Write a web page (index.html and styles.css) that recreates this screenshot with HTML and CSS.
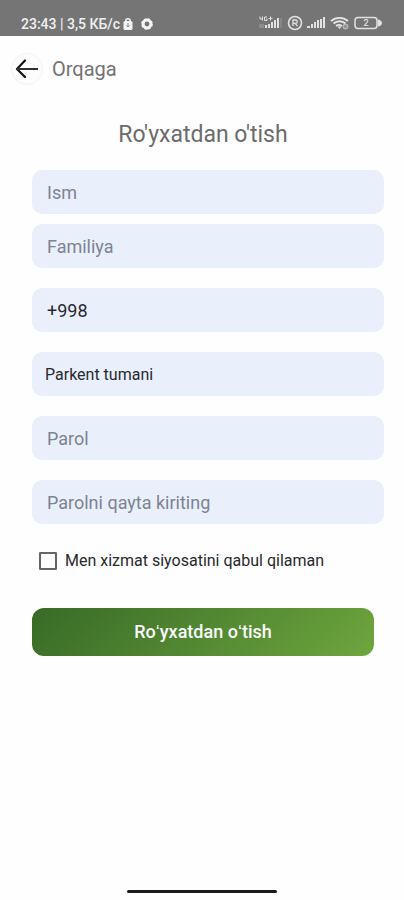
FILE: index.html
```html
<!DOCTYPE html>
<html lang="uz">
<head>
<meta charset="utf-8">
<meta name="viewport" content="width=device-width, initial-scale=1">
<title>Ro'yxatdan o'tish</title>
<link rel="stylesheet" href="styles.css">
</head>
<body>
<div class="status">
  <div class="status-group">
    <span>23:43 | 3,5 КБ/с</span>
    <svg width="10" height="12" viewBox="0 0 10 12"><path d="M2.800 4V2.800a2.200 2 0 0 1 4.400 0V4" fill="none" stroke="#f2f2f2" stroke-width="1.500"/><rect x="0.500" y="3" width="9" height="9" rx="1.500" fill="#f2f2f2"/><path d="M5 5v4M3.500 7.500 5 9l1.500-1.500" fill="none" stroke="#858585"/></svg>
    <svg class="gear" width="12" height="12" viewBox="0 0 12 12"><circle cx="6" cy="6" r="3.900" fill="none" stroke="#f4f4f4" stroke-width="3"/><circle cx="6" cy="6" r="5.200" fill="none" stroke="#f4f4f4" stroke-width="1.200" stroke-dasharray="2.500 1.600"/></svg>
  </div>
  <svg class="status-icons" width="126" height="16" viewBox="0 0 126 16">
    <g fill="none" stroke="#dedede" stroke-width="1">
      <path d="M2 1.500v2.500h3M4.500 1.500v4M9 2H6.500v3.500H9V4H8M10.500 3.500h4M12.500 1.500v4"/>
      <path d="M1 10h5M1 12h5" stroke="#a8a8a8"/>
    </g>
    <path d="M7 10h2v3H7zM10 9h2v4h-2zM13 7h2v6h-2zM16 5h2v8h-2zM19 3h2v10h-2z" fill="#e2e2e2"/>
    <path d="M23 3v10" stroke="#999" fill="none"/>
    <circle cx="37" cy="8" r="6.500" fill="none" stroke="#e2e2e2" stroke-width="1.600"/>
    <path d="M35 11V5h2.500a1.700 1.700 0 0 1 0 3.400H35M37 8.400 39.500 11" fill="none" stroke="#e2e2e2" stroke-width="1.300"/>
    <path d="M49 11h3v2h-3zM53 9h2v4h-2zM56 7h2v6h-2zM59 5h2v8h-2zM62 4h2v9h-2zM65 2h2v11h-2z" fill="#e2e2e2"/>
    <path d="M73 6a13 13 0 0 1 17 0M75.500 8.500a9 9 0 0 1 12 0M78 11a5 5 0 0 1 6 0" fill="none" stroke="#e6e6e6" stroke-width="1.900"/>
    <path d="m79.500 11.500 2 2.500 2-2.500z" fill="#e6e6e6"/>
    <circle cx="87.500" cy="11.500" r="2.500" fill="#999" stroke="#c5c5c5"/>
    <rect x="97" y="2.500" width="22" height="11" rx="3" fill="none" stroke="#e2e2e2" stroke-width="1.500"/>
    <path d="M120 4.500q4 1 4 3.500t-4 3.500z" fill="#e2e2e2"/>
    <text class="battery-level" x="108" y="11" text-anchor="middle">2</text>
  </svg>
</div>
<header class="topbar">
  <button class="back" type="button" aria-label="Orqaga">
    <svg width="24" height="20" viewBox="0 0 24 20"><path d="M10 1.500 2 10l8 8" fill="none" stroke="#111" stroke-width="2.200" stroke-linecap="round" stroke-linejoin="round"/><path d="M2 10h21" stroke="#333" stroke-width="2"/></svg>
  </button>
  <span class="topbar-title">Orqaga</span>
</header>
<main>
  <form class="form">
    <h1 class="title">Ro'yxatdan o'tish</h1>
    <div class="names">
      <input class="field" type="text" placeholder="Ism" aria-label="Ism">
      <input class="field" type="text" placeholder="Familiya" aria-label="Familiya">
    </div>
    <input class="field" type="tel" value="+998" aria-label="Telefon">
    <select class="field field-select" aria-label="Tuman"><option>Parkent tumani</option></select>
    <input class="field" type="password" placeholder="Parol" aria-label="Parol">
    <input class="field" type="password" placeholder="Parolni qayta kiriting" aria-label="Parolni qayta kiriting">
    <label class="agree"><input class="checkbox" type="checkbox">Men xizmat siyosatini qabul qilaman</label>
    <button class="submit" type="submit">Roʻyxatdan oʻtish</button>
  </form>
</main>
<div class="home-indicator"></div>
</body>
</html>
```
FILE: styles.css
```css
* { box-sizing: border-box; }

body {
  margin: 0;
  min-height: 100vh;
  display: flex;
  flex-direction: column;
  background: #fefefe;
  color: #29292d;
  font-family: Roboto, "Liberation Sans", sans-serif;
  font-size: 16px;
}

.status {
  height: 36px;
  padding: 12px 20px 0 21px;
  display: flex;
  justify-content: space-between;
  background: #757575;
  color: #f0f0f0;
  font-size: 14px;
  font-weight: 500;
  line-height: 24px;
}

.status-group {
  display: flex;
  align-items: center;
  height: 24px;
  gap: 3px;
}

.gear { margin-left: 5px; }
.status-icons { margin-top: 3px; }
.battery-level { fill: #e2e2e2; font-size: 9px; }

.topbar {
  display: flex;
  align-items: center;
  gap: 9px;
  padding: 15px 11px 0;
}

.back {
  width: 32px;
  height: 32px;
  padding: 0;
  display: flex;
  align-items: center;
  justify-content: center;
  border: 1px solid #f3f3f3;
  border-radius: 50%;
  background: #fdfdfd;
}

.topbar-title {
  color: #747474;
  font-size: 20px;
  line-height: 36px;
}

.form {
  display: flex;
  flex-direction: column;
  gap: 20px;
  padding: 33px 20px 0 32px;
}

.title {
  margin: 0 10px 0 0;
  color: #6c6c6c;
  font-size: 23px;
  font-weight: 400;
  line-height: 30px;
  text-align: center;
}

.names {
  display: flex;
  flex-direction: column;
  gap: 10px;
}

.field {
  width: 100%;
  height: 44px;
  padding: 0 15px;
  border: 0;
  border-radius: 10px;
  background: #e9f0fc;
  color: #29292d;
  font: inherit;
  font-size: 18px;
  appearance: none;
}

.field::placeholder {
  color: #7d8391;
  opacity: 1;
}

.field-select {
  padding-left: 13px;
  font-size: 16px;
}

.agree {
  display: flex;
  align-items: center;
  gap: 8px;
  padding-left: 7px;
  line-height: 34px;
}

.checkbox {
  width: 18px;
  height: 18px;
  margin: 0;
  border: 2px solid #666;
  border-radius: 1px;
  background: #fefefe;
  appearance: none;
}

.submit {
  height: 48px;
  margin: 10px 10px 0 0;
  border: 0;
  border-radius: 12px;
  background: linear-gradient(135deg, #386a27, #6ea63e);
  color: #fafafa;
  font: inherit;
  font-size: 18px;
  font-weight: 500;
}

.home-indicator {
  width: 150px;
  height: 3px;
  margin: auto auto 7px;
  border-radius: 2px;
  background: #1c1c1c;
}
```
